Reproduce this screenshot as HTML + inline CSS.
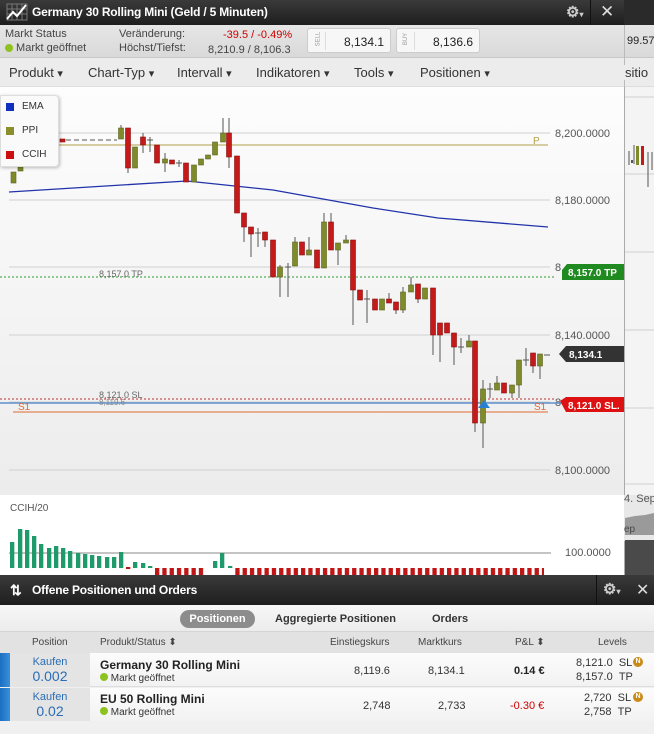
<!DOCTYPE html>
<html><head><meta charset="utf-8"><style>
*{margin:0;padding:0;box-sizing:border-box}
body{width:654px;height:734px;overflow:hidden;font-family:"Liberation Sans",sans-serif;background:#f0f0f0;position:relative;font-size:12px;color:#333}
.abs{position:absolute}
.hdr{background:linear-gradient(#3a3a3a,#1e1e1e);color:#fff;font-weight:bold;font-size:13px}
</style></head><body>
<!-- top header -->
<div class="abs hdr" style="left:0;top:0;width:654px;height:25px">
 <svg class="abs" style="left:6px;top:3px" width="22" height="18"><g stroke="#777" stroke-width="1" fill="none"><path d="M1 1h20v16H1zM1 6h20M1 11h20M6 1v16M11 1v16M16 1v16"/></g><path d="M1 16l6-7 4 4 9-11" stroke="#fff" stroke-width="2" fill="none"/></svg>
 <span class="abs" style="left:32px;top:5px;font-size:12px;letter-spacing:-0.2px">Germany 30 Rolling Mini (Geld / 5 Minuten)</span>
 <span class="abs" style="left:566px;top:3px;font-size:15px;color:#ccc">⚙<span style="font-size:8px">▾</span></span>
 <div class="abs" style="left:590px;top:0;width:1px;height:25px;background:#111"></div>
 <span class="abs" style="left:600px;top:2px;font-size:17px;color:#ddd;font-weight:normal">✕</span>
 <div class="abs" style="left:624px;top:0;width:30px;height:25px;background:#2a2a2a"></div>
</div>
<!-- info bar -->
<div class="abs" style="left:0;top:25px;width:654px;height:33px;background:linear-gradient(#e6e6e6,#d9d9d9);border-bottom:1px solid #c8c8c8;font-size:11px;color:#444">
 <span class="abs" style="left:5px;top:3px">Markt Status</span>
 <span class="abs" style="left:5px;top:17px"><span style="display:inline-block;width:8px;height:8px;border-radius:50%;background:#8dc21f;vertical-align:-1px"></span> Markt geöffnet</span>
 <span class="abs" style="left:119px;top:3px">Veränderung:</span>
 <span class="abs" style="left:119px;top:17px">Höchst/Tiefst:</span>
 <span class="abs" style="left:223px;top:4px;color:#c00">-39.5 / -0.49%</span>
 <span class="abs" style="left:208px;top:19px">8,210.9 / 8,106.3</span>
 <div class="abs" style="left:307px;top:3px;width:84px;height:25px;background:#f7f7f7;border:1px solid #ccc;border-radius:3px"><span class="abs" style="left:3px;top:7px;font-size:6px;color:#999;transform:rotate(-90deg)">SELL</span><div class="abs" style="left:17px;top:3px;width:1px;height:18px;background:#ddd"></div><span class="abs" style="left:36px;top:6px;font-size:12px;color:#222">8,134.1</span></div>
 <div class="abs" style="left:396px;top:3px;width:84px;height:25px;background:#f7f7f7;border:1px solid #ccc;border-radius:3px"><span class="abs" style="left:3px;top:7px;font-size:6px;color:#999;transform:rotate(-90deg)">BUY</span><div class="abs" style="left:17px;top:3px;width:1px;height:18px;background:#ddd"></div><span class="abs" style="left:36px;top:6px;font-size:12px;color:#222">8,136.6</span></div>
 <div class="abs" style="left:624px;top:0;width:1px;height:33px;background:#bbb"></div>
 <span class="abs" style="left:627px;top:10px;font-size:11px;color:#222">99.57</span>
</div>
<!-- toolbar -->
<div class="abs" style="left:0;top:58px;width:654px;height:29px;background:#ececec;border-bottom:1px solid #ddd;font-size:13px;color:#333">
 <span class="abs" style="left:9px;top:7px">Produkt <small>▾</small></span>
 <span class="abs" style="left:88px;top:7px">Chart-Typ <small>▾</small></span>
 <span class="abs" style="left:177px;top:7px">Intervall <small>▾</small></span>
 <span class="abs" style="left:256px;top:7px">Indikatoren <small>▾</small></span>
 <span class="abs" style="left:354px;top:7px">Tools <small>▾</small></span>
 <span class="abs" style="left:420px;top:7px">Positionen <small>▾</small></span>
 <div class="abs" style="left:624px;top:0;width:1px;height:29px;background:#bbb"></div>
 <span class="abs" style="left:619px;top:7px;background:#ececec;padding-left:6px">sitio</span>
</div>
<!-- chart svg -->
<svg class="abs" style="left:0;top:87px" width="654" height="488" viewBox="0 87 654 488">
<defs><linearGradient id="bg" x1="0" y1="0" x2="0" y2="1"><stop offset="0" stop-color="#fdfdfd"/><stop offset="1" stop-color="#ececec"/></linearGradient>
<pattern id="rb" x="155" y="0" width="7.3" height="10" patternUnits="userSpaceOnUse"><rect x="0" y="0" width="4.3" height="10" fill="#c01515"/></pattern></defs>
<rect x="0" y="87" width="624" height="408" fill="url(#bg)"/>
<rect x="0" y="495" width="624" height="80" fill="#fff"/>
<rect x="624" y="87" width="30" height="488" fill="#f4f4f4"/>
<line x1="624.5" y1="87" x2="624.5" y2="575" stroke="#aaa"/>
<g stroke="#d0d0d0"><line x1="9" y1="133" x2="550" y2="133"/><line x1="9" y1="200" x2="550" y2="200"/><line x1="9" y1="267" x2="550" y2="267"/><line x1="9" y1="335" x2="550" y2="335"/><line x1="9" y1="402" x2="550" y2="402"/><line x1="9" y1="470" x2="550" y2="470"/>
<line x1="625" y1="97" x2="654" y2="97"/><line x1="625" y1="174" x2="654" y2="174"/><line x1="625" y1="252" x2="654" y2="252"/><line x1="625" y1="330" x2="654" y2="330"/><line x1="625" y1="408" x2="654" y2="408"/><line x1="625" y1="484" x2="654" y2="484"/></g>
<g font-size="11" fill="#555" font-family="Liberation Sans"><text x="555" y="137">8,200.0000</text><text x="555" y="204">8,180.0000</text><text x="555" y="271">8</text><text x="555" y="339">8,140.0000</text><text x="555" y="406">8</text><text x="555" y="474">8,100.0000</text></g>
<line x1="58" y1="145" x2="548" y2="145" stroke="#b3a04a"/><text x="533" y="144" font-size="10" fill="#b3a04a">P</text>
<path d="M9 192 L187 181 L273 190 L373 208 L438 218 L548 227" stroke="#2233aa" stroke-width="1.3" fill="none"/>
<line x1="0" y1="277" x2="556" y2="277" stroke="#2a9a2a" stroke-dasharray="2,2"/>
<text x="99" y="277" font-size="9" fill="#666">8,157.0 TP</text>
<line x1="0" y1="399" x2="556" y2="399" stroke="#c43030" stroke-dasharray="2,2"/>
<line x1="0" y1="403" x2="624" y2="403" stroke="#5d8fd0" stroke-width="1.5"/>
<text x="99" y="398" font-size="9" fill="#666">8,121.0 SL</text><text x="99" y="405" font-size="8" fill="#888">8,119.6</text>
<line x1="13" y1="412" x2="548" y2="412" stroke="#e06a30"/>
<text x="18" y="410" font-size="10" fill="#e06a30">S1</text><text x="534" y="410" font-size="10" fill="#e06a30">S1</text>
<g stroke="#555" stroke-width="1">
<line x1="121" y1="125" x2="121" y2="139"/><line x1="128" y1="128" x2="128" y2="173"/><line x1="143" y1="133" x2="143" y2="153"/><line x1="150" y1="137" x2="150" y2="152"/><line x1="165" y1="153" x2="165" y2="172"/><line x1="179" y1="160" x2="179" y2="167"/>
<line x1="223" y1="118" x2="223" y2="142"/><line x1="229" y1="118" x2="229" y2="168"/><line x1="244" y1="213" x2="244" y2="242"/><line x1="251" y1="227" x2="251" y2="257"/><line x1="258" y1="228" x2="258" y2="247"/><line x1="265" y1="232" x2="265" y2="247"/>
<line x1="280" y1="265" x2="280" y2="297"/><line x1="288" y1="263" x2="288" y2="297"/><line x1="295" y1="237" x2="295" y2="266"/><line x1="309" y1="237" x2="309" y2="255"/><line x1="324" y1="213" x2="324" y2="268"/><line x1="331" y1="213" x2="331" y2="250"/><line x1="338" y1="243" x2="338" y2="265"/><line x1="346" y1="235" x2="346" y2="243"/>
<line x1="353" y1="240" x2="353" y2="325"/><line x1="367" y1="290" x2="367" y2="323"/><line x1="389" y1="293" x2="389" y2="303"/><line x1="396" y1="302" x2="396" y2="314"/><line x1="403" y1="287" x2="403" y2="313"/><line x1="411" y1="277" x2="411" y2="292"/><line x1="418" y1="284" x2="418" y2="303"/>
<line x1="433" y1="288" x2="433" y2="355"/><line x1="440" y1="323" x2="440" y2="362"/><line x1="454" y1="333" x2="454" y2="365"/><line x1="461" y1="338" x2="461" y2="353"/><line x1="469" y1="335" x2="469" y2="347"/><line x1="475" y1="341" x2="475" y2="432"/><line x1="483" y1="380" x2="483" y2="448"/><line x1="490" y1="383" x2="490" y2="398"/><line x1="497" y1="376" x2="497" y2="390"/><line x1="512" y1="385" x2="512" y2="398"/><line x1="519" y1="360" x2="519" y2="398"/><line x1="526" y1="348" x2="526" y2="366"/><line x1="533" y1="353" x2="533" y2="373"/><line x1="540" y1="354" x2="540" y2="379"/>
</g>
<g stroke="#555"><line x1="66" y1="140" x2="117" y2="140" stroke-dasharray="5,3"/><line x1="147" y1="140" x2="153" y2="140"/><line x1="176" y1="163" x2="182" y2="163"/><line x1="255" y1="233" x2="261" y2="233"/><line x1="285" y1="267" x2="291" y2="267"/><line x1="364" y1="299" x2="370" y2="299"/><line x1="458" y1="347" x2="464" y2="347"/><line x1="487" y1="389" x2="493" y2="389"/><line x1="523" y1="360" x2="529" y2="360"/><line x1="544" y1="355" x2="550" y2="355"/></g>
<g fill="#7f8a2b" stroke="#5b6420" stroke-width="0.6">
<rect x="11" y="172" width="5" height="11"/><rect x="18" y="167" width="5" height="4"/><rect x="118.5" y="128" width="5" height="11"/><rect x="132.5" y="147" width="5" height="21"/><rect x="162.5" y="159" width="5" height="4"/><rect x="191.5" y="165" width="5" height="17"/><rect x="198.5" y="159" width="5" height="6"/><rect x="205.5" y="155" width="5" height="4"/><rect x="212.5" y="142" width="5" height="13"/><rect x="220.5" y="133" width="5" height="9"/>
<rect x="277.5" y="267" width="5" height="10"/><rect x="292.5" y="242" width="5" height="24"/><rect x="306.5" y="250" width="5" height="5"/><rect x="321.5" y="222" width="5" height="46"/><rect x="335.5" y="243" width="5" height="7"/><rect x="343.5" y="240" width="5" height="3"/>
<rect x="379.5" y="299" width="5" height="11"/><rect x="400.5" y="292" width="5" height="18"/><rect x="408.5" y="285" width="5" height="7"/><rect x="422.5" y="288" width="5" height="11"/><rect x="466.5" y="341" width="5" height="6"/><rect x="480.5" y="389" width="5" height="34"/><rect x="494.5" y="383" width="5" height="7"/><rect x="509.5" y="385" width="5" height="8"/><rect x="516.5" y="360" width="5" height="25"/><rect x="537.5" y="354" width="5" height="12"/>
</g>
<g fill="#c41a1a" stroke="#8a1010" stroke-width="0.6">
<rect x="60" y="139" width="5" height="3"/><rect x="125.5" y="128" width="5" height="40"/><rect x="140.5" y="137" width="5" height="8"/><rect x="154.5" y="145" width="5" height="18"/><rect x="169.5" y="160" width="5" height="4"/><rect x="183.5" y="163" width="5" height="19"/><rect x="226.5" y="133" width="5" height="24"/><rect x="234.5" y="156" width="5" height="57"/><rect x="241.5" y="213" width="5" height="14"/><rect x="248.5" y="227" width="5" height="7"/><rect x="262.5" y="232" width="5" height="8"/><rect x="270.5" y="240" width="5" height="37"/>
<rect x="299.5" y="242" width="5" height="13"/><rect x="314.5" y="250" width="5" height="18"/><rect x="328.5" y="222" width="5" height="28"/><rect x="350.5" y="240" width="5" height="50"/><rect x="357.5" y="290" width="5" height="10"/><rect x="372.5" y="299" width="5" height="11"/><rect x="386.5" y="299" width="5" height="4"/><rect x="393.5" y="302" width="5" height="8"/><rect x="415.5" y="284" width="5" height="15"/>
<rect x="430.5" y="288" width="5" height="47"/><rect x="437.5" y="323" width="5" height="12"/><rect x="444.5" y="323" width="5" height="10"/><rect x="451.5" y="333" width="5" height="14"/><rect x="472.5" y="341" width="5" height="82"/><rect x="501.5" y="383" width="5" height="10"/><rect x="530.5" y="353" width="5" height="13"/>
</g>
<path d="M478 408 L484 400 L490 408 Z" fill="#2a7fd0"/>
<path d="M562 270 L567 264 L624 264 L624 280 L562 280 Z" fill="#1f8a1f"/><text x="568" y="276" font-size="10" font-weight="bold" fill="#fff">8,157.0 TP</text>
<path d="M559 354 L566 346 L624 346 L624 362 L566 362 Z" fill="#333"/><text x="569" y="358" font-size="10" font-weight="bold" fill="#fff">8,134.1</text>
<path d="M560 401 L566 397 L624 397 L624 412 L566 412 Z" fill="#dd1111"/><text x="568" y="409" font-size="10" font-weight="bold" fill="#fff">8,121.0 SL.</text>
<g stroke="#555"><line x1="629" y1="151" x2="629" y2="165"/><line x1="634" y1="145" x2="634" y2="164"/><line x1="648" y1="152" x2="648" y2="187"/><line x1="652" y1="152" x2="652" y2="170"/></g>
<rect x="636" y="146" width="3" height="19" fill="#7f8a2b"/><rect x="641" y="146" width="3" height="19" fill="#c41a1a"/><rect x="631" y="160" width="2" height="3" fill="#555"/>
<rect x="624" y="495" width="30" height="46" fill="#e8e8e8"/>
<text x="624" y="502" font-size="11" fill="#555">4. Sep</text>
<path d="M625 518 L635 516 L645 515 L654 513 L654 535 L625 535 Z" fill="#9a9a9a"/><text x="624" y="532" font-size="10" fill="#444">ep</text>
<rect x="625" y="540" width="29" height="35" fill="#4a4a4a"/>
<text x="10" y="511" font-size="10" fill="#555">CCIH/20</text>
<line x1="9" y1="553" x2="551" y2="553" stroke="#888"/>
<text x="565" y="556" font-size="11" fill="#555">100.0000</text>
<g fill="#1f9a6a">
<rect x="10" y="542" width="4.3" height="26"/><rect x="18" y="529" width="4.3" height="39"/><rect x="25" y="530" width="4.3" height="38"/><rect x="32" y="536" width="4.3" height="32"/><rect x="39" y="544" width="4.3" height="24"/><rect x="47" y="548" width="4.3" height="20"/><rect x="54" y="546" width="4.3" height="22"/><rect x="61" y="548" width="4.3" height="20"/><rect x="68" y="551" width="4.3" height="17"/><rect x="76" y="553" width="4.3" height="15"/><rect x="83" y="554" width="4.3" height="14"/><rect x="90" y="555" width="4.3" height="13"/><rect x="97" y="556" width="4.3" height="12"/><rect x="105" y="557" width="4.3" height="11"/><rect x="112" y="557" width="4.3" height="11"/><rect x="119" y="552" width="4.3" height="16"/>
<rect x="133" y="562" width="4.3" height="6"/><rect x="141" y="563" width="4.3" height="5"/><rect x="148" y="566" width="4.3" height="2"/><rect x="213" y="561" width="4.3" height="7"/><rect x="220" y="553" width="4.3" height="15"/><rect x="228" y="566" width="4.3" height="2"/></g>
<rect x="126" y="567" width="4.3" height="2" fill="#c01515"/>
<rect x="155" y="568" width="50" height="7" fill="url(#rb)"/><rect x="234" y="568" width="310" height="7" fill="url(#rb)"/>
</svg>
<div class="abs" style="left:0;top:95px;width:59px;height:72px;background:#fafafa;border:1px solid #ddd;border-radius:0 4px 4px 0;box-shadow:1px 1px 3px rgba(0,0,0,.25);font-size:10px;color:#333">
 <div class="abs" style="left:5px;top:7px;width:8px;height:8px;background:#1030c0"></div><span class="abs" style="left:21px;top:5px">EMA</span>
 <div class="abs" style="left:5px;top:31px;width:8px;height:8px;background:#8a8f2c"></div><span class="abs" style="left:21px;top:29px">PPI</span>
 <div class="abs" style="left:5px;top:55px;width:8px;height:8px;background:#cc1010"></div><span class="abs" style="left:21px;top:53px">CCIH</span>
</div>
<div class="abs hdr" style="left:0;top:575px;width:654px;height:30px">
 <span class="abs" style="left:10px;top:7px;font-size:14px">⇅</span>
 <span class="abs" style="left:32px;top:8px;font-size:12px;letter-spacing:-0.2px">Offene Positionen und Orders</span>
 <div class="abs" style="left:596px;top:0;width:1px;height:30px;background:#111"></div>
 <span class="abs" style="left:603px;top:5px;font-size:15px;color:#ccc">⚙<span style="font-size:8px">▾</span></span>
 <span class="abs" style="left:636px;top:5px;font-size:16px;color:#ddd;font-weight:normal">✕</span>
</div>
<div class="abs" style="left:0;top:605px;width:654px;height:27px;background:linear-gradient(#f7f7f7,#ececec);border-bottom:1px solid #d5d5d5;font-size:11px;font-weight:bold;color:#333">
 <div class="abs" style="left:180px;top:5px;width:75px;height:18px;background:#8c8c8c;border-radius:9px;color:#fff;text-align:center;line-height:18px">Positionen</div>
 <span class="abs" style="left:275px;top:8px">Aggregierte Positionen</span>
 <span class="abs" style="left:432px;top:8px">Orders</span>
</div>
<div class="abs" style="left:0;top:632px;width:654px;height:21px;background:#e2e2e2;font-size:10px;color:#444">
 <span class="abs" style="left:32px;top:5px">Position</span>
 <span class="abs" style="left:100px;top:5px">Produkt/Status ⬍</span>
 <span class="abs" style="left:330px;top:5px">Einstiegskurs</span>
 <span class="abs" style="left:418px;top:5px">Marktkurs</span>
 <span class="abs" style="left:515px;top:5px">P&amp;L ⬍</span>
 <span class="abs" style="left:598px;top:5px">Levels</span>
</div>
<div class="abs" style="left:0;top:653px;width:654px;height:34px;background:linear-gradient(#fcfcfc,#f2f2f2);border-bottom:1px solid #ddd;font-size:11px;color:#333">
 <div class="abs" style="left:0;top:0;width:10px;height:34px;background:linear-gradient(90deg,#1a6fc0,#3a90dc)"></div>
 <div class="abs" style="left:10px;top:0;width:80px;height:34px;background:#e4e4e4;text-align:center;color:#2a6db5"><div style="font-size:11px;margin-top:3px">Kaufen</div><div style="font-size:14px">0.002</div></div>
 <span class="abs" style="left:100px;top:5px;font-size:12px;font-weight:bold;color:#222">Germany 30 Rolling Mini</span>
 <span class="abs" style="left:100px;top:20px;font-size:10px"><span style="display:inline-block;width:8px;height:8px;border-radius:50%;background:#8dc21f"></span> Markt geöffnet</span>
 <span class="abs" style="left:354px;top:12px">8,119.6</span><span class="abs" style="left:428px;top:12px">8,134.1</span>
 <span class="abs" style="left:514px;top:12px;font-weight:bold;color:#222">0.14 €</span>
 <span class="abs" style="left:576px;top:4px">8,121.0 &nbsp;SL</span><span class="abs" style="left:576px;top:18px">8,157.0 &nbsp;TP</span>
 <div class="abs" style="left:633px;top:4px;width:10px;height:10px;border-radius:50%;background:#c98a17;color:#fff;font-size:7px;text-align:center;line-height:10px;font-weight:bold">N</div>
</div>
<div class="abs" style="left:0;top:688px;width:654px;height:33px;background:linear-gradient(#fcfcfc,#f2f2f2);font-size:11px;color:#333">
 <div class="abs" style="left:0;top:0;width:10px;height:33px;background:linear-gradient(90deg,#1a6fc0,#3a90dc)"></div>
 <div class="abs" style="left:10px;top:0;width:80px;height:33px;background:#e4e4e4;text-align:center;color:#2a6db5"><div style="font-size:11px;margin-top:3px">Kaufen</div><div style="font-size:14px">0.02</div></div>
 <span class="abs" style="left:100px;top:4px;font-size:12px;font-weight:bold;color:#222">EU 50 Rolling Mini</span>
 <span class="abs" style="left:100px;top:19px;font-size:10px"><span style="display:inline-block;width:8px;height:8px;border-radius:50%;background:#8dc21f"></span> Markt geöffnet</span>
 <span class="abs" style="left:363px;top:12px">2,748</span><span class="abs" style="left:438px;top:12px">2,733</span>
 <span class="abs" style="left:510px;top:12px;color:#c00">-0.30 €</span>
 <span class="abs" style="left:584px;top:4px">2,720 &nbsp;SL</span><span class="abs" style="left:584px;top:18px">2,758 &nbsp;TP</span>
 <div class="abs" style="left:633px;top:4px;width:10px;height:10px;border-radius:50%;background:#c98a17;color:#fff;font-size:7px;text-align:center;line-height:10px;font-weight:bold">N</div>
</div>
</body></html>
